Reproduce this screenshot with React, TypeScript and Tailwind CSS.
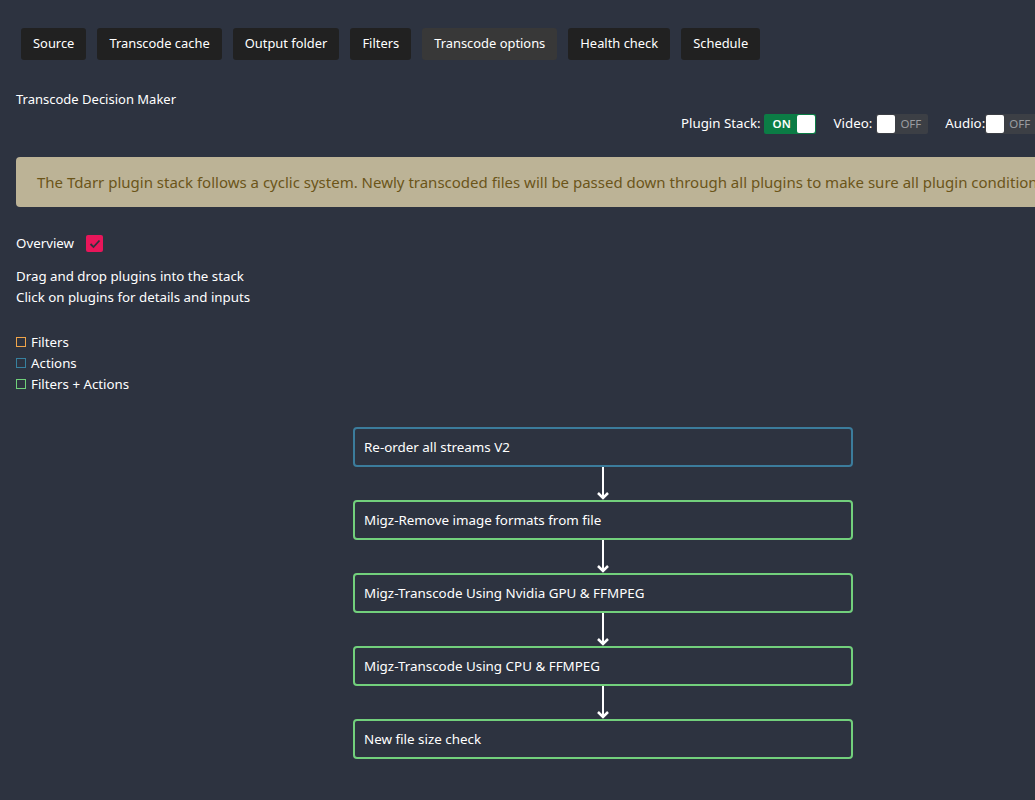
import React from "react";

const tabs = ["Source", "Transcode cache", "Output folder", "Filters", "Transcode options", "Health check", "Schedule"];

const plugins: { name: string; color: string }[] = [
  { name: "Re-order all streams V2", color: "blue" },
  { name: "Migz-Remove image formats from file", color: "green" },
  { name: "Migz-Transcode Using Nvidia GPU & FFMPEG", color: "green" },
  { name: "Migz-Transcode Using CPU & FFMPEG", color: "green" },
  { name: "New file size check", color: "green" },
];

function Arrow() {
  return (
    <div className="flex h-[33px] justify-center">
      <svg width="16" height="33" viewBox="0 0 16 33">
        <line x1="8" y1="0" x2="8" y2="31" stroke="white" strokeWidth="2" />
        <polyline points="3,26 8,31 13,26" fill="none" stroke="white" strokeWidth="2.5" />
      </svg>
    </div>
  );
}

export default function App() {
  return (
    <div
      className="min-h-[800px] w-[1035px] overflow-hidden bg-[#2d3340] text-white"
      style={{ fontFamily: '"Noto Sans", "Open Sans", sans-serif' }}
    >
      <div className="w-[1200px] pl-[16px]">
        <div className="flex gap-[11px] pl-[5px] pt-[28px]">
          {tabs.map((t) => (
            <div
              key={t}
              className={`flex h-[32px] items-center rounded-[3px] px-[12px] text-[12.9px] ${
                t === "Transcode options" ? "bg-[#383838]" : "bg-[#212121]"
              }`}
            >
              {t}
            </div>
          ))}
        </div>

        <div className="mt-[30px] text-[13px] leading-[18px]">Transcode Decision Maker</div>

        <div className="mt-[5px] flex h-[22px] items-center pl-[665px] text-[13.3px]">
          <span>Plugin Stack:</span>
          <div className="ml-[3px] flex h-[20px] w-[52px] items-center rounded-[2px] bg-[#0b7c45] pl-[9px] pr-[1px]">
            <span className="text-[11.5px] font-semibold">ON</span>
            <div className="ml-auto h-[18px] w-[18px] rounded-[2px] bg-white" />
          </div>
          <span className="ml-[18px]">Video:</span>
          <div className="ml-[4px] flex h-[20px] w-[52px] items-center rounded-[2px] bg-[#3c3f45] pl-[1px] pr-[7px]">
            <div className="h-[18px] w-[18px] rounded-[2px] bg-white" />
            <span className="ml-auto text-[11.5px] text-[#9a9ca0]">OFF</span>
          </div>
          <span className="ml-[17px]">Audio:</span>
          <div className="ml-[0px] flex h-[20px] w-[52px] items-center rounded-[2px] bg-[#3c3f45] pl-[1px] pr-[7px]">
            <div className="h-[18px] w-[18px] rounded-[2px] bg-white" />
            <span className="ml-auto text-[11.5px] text-[#9a9ca0]">OFF</span>
          </div>
        </div>

        <div className="mt-[22px] flex h-[50px] items-center rounded-[4px] bg-[#bcb396] px-[21px] text-[15px] whitespace-nowrap text-[#6b5519]">
          The Tdarr plugin stack follows a cyclic system. Newly transcoded files will be passed down through all plugins to make sure all plugin conditions are met.
        </div>

        <div className="mt-[27px] flex items-center text-[13.3px]">
          <span>Overview</span>
          <div className="ml-[12px] flex h-[17px] w-[17px] items-center justify-center rounded-[2px] bg-[#e8165a]">
            <svg width="12" height="10" viewBox="0 0 12 10">
              <polyline points="1.5,5 4.5,8 10.5,1.5" fill="none" stroke="#2d3340" strokeWidth="1.8" />
            </svg>
          </div>
        </div>

        <div className="mt-[12px] text-[13.3px] leading-[21px]">
          <div>Drag and drop plugins into the stack</div>
          <div>Click on plugins for details and inputs</div>
        </div>

        <div className="mt-[24px] text-[13.3px] leading-[21px]">
          <div className="flex items-center">
            <span className="mr-[5px] h-[10px] w-[10px] border border-[#f0a54a]" />
            Filters
          </div>
          <div className="flex items-center">
            <span className="mr-[5px] h-[10px] w-[10px] border border-[#37819f]" />
            Actions
          </div>
          <div className="flex items-center">
            <span className="mr-[5px] h-[10px] w-[10px] border border-[#6fd07a]" />
            Filters + Actions
          </div>
        </div>

        <div className="ml-[337px] mt-[32px] w-[500px]">
          {plugins.map((p, i) => (
            <div key={p.name}>
              {i > 0 && <Arrow />}
              <div
                className={`flex h-[40px] items-center rounded-[4px] border-2 px-[9px] text-[13.4px] ${
                  p.color === "blue" ? "border-[#3b7c9c]" : "border-[#72d07c]"
                }`}
              >
                {p.name}
              </div>
            </div>
          ))}
        </div>
      </div>
    </div>
  );
}
